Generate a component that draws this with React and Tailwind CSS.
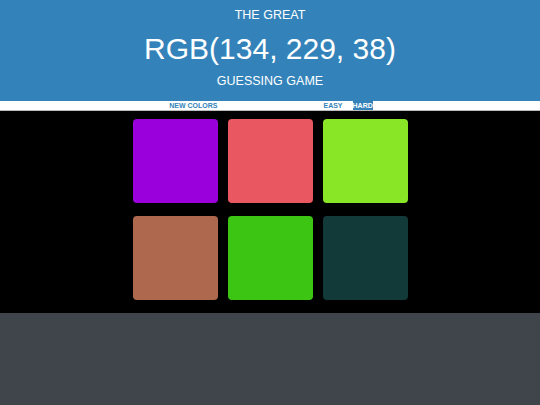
import React from "react";

const colors = ["#9900db", "#e95761", "#89e627", "#ad684e", "#3cc512", "#113a38"];

export default function App() {
  return (
    <div className="w-[540px] h-[405px] bg-[#40444b] flex flex-col" style={{ fontFamily: '"Liberation Sans", Arial, sans-serif' }}>
      <div className="bg-[#3383ba] text-white text-center pt-[8px] pb-[12px]">
        <div className="text-[12.5px] leading-[15px]">THE GREAT</div>
        <div className="text-[30px] leading-[36px] mt-[8px]">RGB(134, 229, 38)</div>
        <div className="text-[12.5px] leading-[15px] mt-[7px]">GUESSING GAME</div>
      </div>
      <div className="bg-white h-[10px] flex justify-center items-stretch text-[7px] font-bold leading-[10px] text-[#3383ba] pr-[6px] border-b border-[#bbbbbb]">
        <button className="px-[5px] ml-[3px] font-bold">NEW COLORS</button>
        <span className="w-[96px]"></span>
        <button className="px-[5px] font-bold">EASY</button>
        <button className="px-0 ml-[5px] bg-[#3383ba] text-white font-bold">HARD</button>
      </div>
      <div className="bg-black pt-[8px] pb-[13px] flex justify-center">
        <div className="grid grid-cols-[85px_85px_85px] gap-x-[10px] gap-y-[13px]">
          {colors.map((c) => (
            <div key={c} className="h-[84px] rounded-[4px]" style={{ backgroundColor: c }} />
          ))}
        </div>
      </div>
    </div>
  );
}
